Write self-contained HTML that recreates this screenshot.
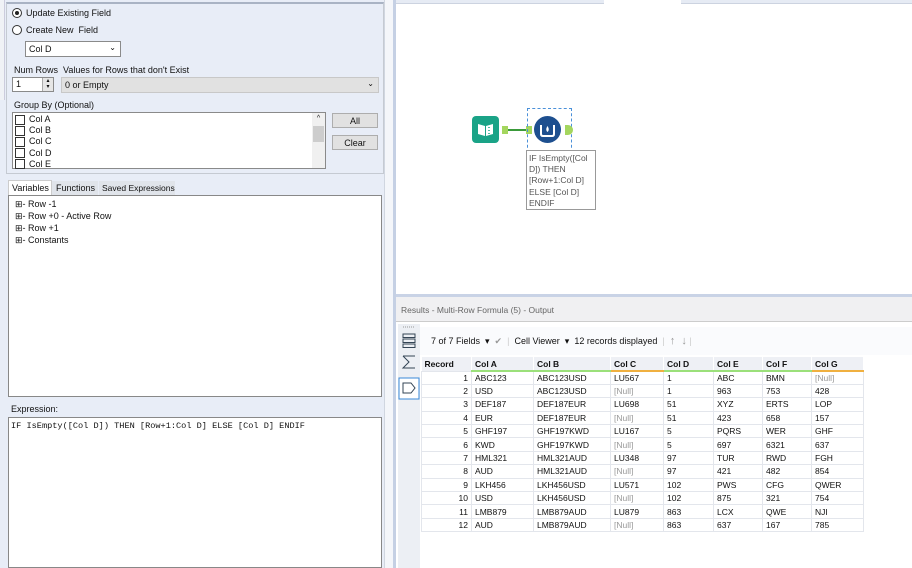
<!DOCTYPE html>
<html><head><meta charset="utf-8"><style>
*{box-sizing:border-box;margin:0;padding:0}
body{width:912px;height:568px;overflow:hidden;background:#fff;font-family:"Liberation Sans",sans-serif;font-size:9px;color:#111;position:relative}
.a{position:absolute;white-space:nowrap}
.sel{border:1px solid #8a8a8a;background:#fff}
.btn{border:1px solid #adadad;background:#e1e1e1;text-align:center;line-height:15px;font-size:9px}
.cb{width:10px;height:10px;border:1px solid #333;background:#fff;display:inline-block;vertical-align:middle;margin-right:4px}
table{border-collapse:collapse;font-size:8.5px}
td{border:1px solid #e3e6ec;height:13.4px;padding:0 3px;white-space:nowrap}
th{text-align:left;font-weight:bold;padding:0 3px;height:14px;background:#eef0f5;border-right:1px solid #fff}
.n{color:#999}
</style></head><body>
<div class="a" style="left:0;top:0;width:384px;height:568px;background:#e8edf7"></div>
<div class="a" style="left:0;top:0;width:5px;height:100px;background:#f0f2f6;border-right:1px solid #ccd"></div>
<div class="a" style="left:6px;top:2px;width:378px;height:172px;border:1px solid #c5cad2;border-top:2px solid #a9b3c4"></div>
<div class="a" style="left:12px;top:8px;width:10px;height:10px;border:1px solid #333;border-radius:50%;background:#fff"><div style="margin:2px;width:4px;height:4px;border-radius:50%;background:#222"></div></div>
<div class="a" style="left:26px;top:8px">Update Existing Field</div>
<div class="a" style="left:12px;top:25px;width:10px;height:10px;border:1px solid #333;border-radius:50%;background:#fff"></div>
<div class="a" style="left:26px;top:25px">Create New &nbsp;Field</div>
<div class="a sel" style="left:25px;top:41px;width:96px;height:16px;padding:2px 3px">Col D<span style="position:absolute;right:4px;top:1px;font-size:8px">&#8964;</span></div>
<div class="a" style="left:14px;top:65px">Num Rows</div>
<div class="a" style="left:63px;top:65px">Values for Rows that don't Exist</div>
<div class="a sel" style="left:12px;top:77px;width:42px;height:15px;padding:1px 3px">1<span style="position:absolute;right:0;top:0;width:11px;height:13px;background:#e6e6e6;border-left:1px solid #aaa;font-size:6px;line-height:6px;text-align:center">▴<br>▾</span></div>
<div class="a" style="left:61px;top:77px;width:318px;height:16px;background:#e1e1e1;border:1px solid #c8c8c8;padding:2px 3px">0 or Empty<span style="position:absolute;right:4px;top:1px;font-size:8px">&#8964;</span></div>
<div class="a" style="left:14px;top:100px">Group By (Optional)</div>
<div class="a sel" style="left:12px;top:112px;width:314px;height:57px;padding:1px 2px;line-height:11.2px">
<div><span class="cb"></span>Col A</div><div><span class="cb"></span>Col B</div><div><span class="cb"></span>Col C</div><div><span class="cb"></span>Col D</div><div><span class="cb"></span>Col E</div>
<div style="position:absolute;right:0;top:0;width:13px;height:55px;background:#f0f0f0;font-size:7px;text-align:center">^<div style="height:16px;background:#cdcdcd;margin:2px 1px"></div></div></div>
<div class="a btn" style="left:332px;top:113px;width:46px;height:15px">All</div>
<div class="a btn" style="left:332px;top:135px;width:46px;height:15px">Clear</div>
<div class="a" style="left:8px;top:180px;width:44px;height:15px;background:#fff;border:1px solid #ccc;border-bottom:none;padding:2px 3px">Variables</div>
<div class="a" style="left:52px;top:181px;width:46px;height:14px;background:#e0e4ea;padding:2px 4px">Functions</div>
<div class="a" style="left:99px;top:181px;width:76px;height:14px;background:#e0e4ea;padding:2px 3px;font-size:8.5px">Saved Expressions</div>
<div class="a" style="left:8px;top:195px;width:374px;height:202px;background:#fff;border:1px solid #888;padding:2px 6px;line-height:12px">
<div>⊞- Row -1</div><div>⊞- Row +0 - Active Row</div><div>⊞- Row +1</div><div>⊞- Constants</div></div>
<div class="a" style="left:11px;top:404px">Expression:</div>
<div class="a" style="left:8px;top:417px;width:374px;height:151px;background:#fff;border:1px solid #888;padding:3px 2px;font-family:'Liberation Mono',monospace;font-size:8.6px">IF IsEmpty([Col D]) THEN [Row+1:Col D] ELSE [Col D] ENDIF</div>
<div class="a" style="left:384px;top:0;width:12px;height:568px;background:#f4f6fa;border-left:1px solid #d0d6e0"></div>
<div class="a" style="left:393px;top:0;width:3px;height:568px;background:#c5d0e4"></div>
<div class="a" style="left:396px;top:0;width:208px;height:4px;background:#e6ebf4;border-bottom:1px solid #ccd3e0"></div>
<div class="a" style="left:681px;top:0;width:231px;height:4px;background:#e6ebf4;border-bottom:1px solid #ccd3e0"></div>
<div class="a" style="left:472px;top:116px;width:27px;height:27px;background:#1aa387;border-radius:4px"><svg width="27" height="27"><path d="M6 8 L13 10 L13 20 L6 18Z M14 10 L21 8 L21 18 L14 20Z" fill="#fff"/><path d="M17 11v1M17 14v1M17 17v1" stroke="#1aa387" stroke-width="1.5"/></svg></div>
<div class="a" style="left:502px;top:126px;width:6px;height:8px;background:#a4d65e"></div>
<div class="a" style="left:508px;top:129px;width:18px;height:1.5px;background:#3a9a3a"></div>
<div class="a" style="left:526px;top:126px;width:6px;height:8px;background:#a4d65e"></div>
<div class="a" style="left:527px;top:108px;width:45px;height:45px;border:1px dashed #4a90d9"></div>
<div class="a" style="left:534px;top:116px;width:27px;height:27px;border-radius:50%;background:#1d4f8f"><svg width="27" height="27"><path d="M7 9 L7 18 Q7 20 9 20 L18 20 Q20 20 20 18 L20 9" stroke="#fff" stroke-width="2" fill="none"/><path d="M13.5 10 Q11 14 13.5 16 Q16 14 13.5 10Z" fill="#fff"/></svg></div>
<div class="a" style="left:565px;top:125px;width:8px;height:10px;background:#a4d65e;border-radius:0 5px 5px 0"></div>
<div class="a" style="left:526px;top:150px;width:70px;height:60px;border:1px solid #999;background:#fff;padding:2px 2px;font-size:8.5px;color:#555;line-height:11.2px;white-space:normal">IF IsEmpty([Col D]) THEN [Row+1:Col D] ELSE [Col D] ENDIF</div>
<div class="a" style="left:396px;top:294px;width:516px;height:3px;background:#c9d3e6"></div>
<div class="a" style="left:396px;top:297px;width:516px;height:25px;background:#f0f0f2;border-bottom:1px solid #ccc;padding:8px 5px;color:#666;font-size:8.5px">Results - Multi-Row Formula (5) - Output</div>
<div class="a" style="left:396px;top:322px;width:516px;height:246px;background:#fff"></div>
<div class="a" style="left:398px;top:324px;width:22px;height:244px;background:#eceff4"></div>
<svg class="a" style="left:398px;top:324px" width="22" height="80"><path d="M5 3h12" stroke="#999" stroke-dasharray="1 1"/><rect x="5" y="10" width="12" height="3.5" fill="none" stroke="#345"/><rect x="5" y="15" width="12" height="3.5" fill="none" stroke="#345"/><rect x="5" y="20" width="12" height="3.5" fill="none" stroke="#345"/><path d="M5 32h12M5 32l6 6l-6 6h12" fill="none" stroke="#345"/><rect x="1" y="54" width="20" height="21" fill="#fff" stroke="#3a8ad8"/><path d="M5 59h8l4 5l-4 5h-8z" fill="none" stroke="#345"/></svg>
<div class="a" style="left:420px;top:327px;width:492px;height:28px;background:#fafbfd;font-size:9px;padding:8px 11px">7 of 7 Fields &nbsp;▾ &nbsp;<span style="color:#999">✔</span> &nbsp;<span style="color:#ccc">|</span>&nbsp; Cell Viewer &nbsp;▾ &nbsp;12 records displayed &nbsp;<span style="color:#ccc">|</span>&nbsp; <span style="color:#999;font-size:11px">↑ &nbsp;↓</span> <span style="color:#ccc">|</span></div>
<table class="a" style="left:421px;top:357px;width:443px">
<tr><th style="width:50px">Record</th><th style="width:62px;border-bottom:2px solid #9be07a">Col A</th><th style="width:77px;border-bottom:2px solid #9be07a">Col B</th><th style="width:53px;border-bottom:2px solid #f0b040">Col C</th><th style="width:50px;border-bottom:2px solid #9be07a">Col D</th><th style="width:49px;border-bottom:2px solid #9be07a">Col E</th><th style="width:49px;border-bottom:2px solid #9be07a">Col F</th><th style="border-bottom:2px solid #f0b040">Col G</th></tr>
<tr><td style="text-align:right">1</td><td>ABC123</td><td>ABC123USD</td><td>LU567</td><td>1</td><td>ABC</td><td>BMN</td><td class="n">[Null]</td></tr>
<tr><td style="text-align:right">2</td><td>USD</td><td>ABC123USD</td><td class="n">[Null]</td><td>1</td><td>963</td><td>753</td><td>428</td></tr>
<tr><td style="text-align:right">3</td><td>DEF187</td><td>DEF187EUR</td><td>LU698</td><td>51</td><td>XYZ</td><td>ERTS</td><td>LOP</td></tr>
<tr><td style="text-align:right">4</td><td>EUR</td><td>DEF187EUR</td><td class="n">[Null]</td><td>51</td><td>423</td><td>658</td><td>157</td></tr>
<tr><td style="text-align:right">5</td><td>GHF197</td><td>GHF197KWD</td><td>LU167</td><td>5</td><td>PQRS</td><td>WER</td><td>GHF</td></tr>
<tr><td style="text-align:right">6</td><td>KWD</td><td>GHF197KWD</td><td class="n">[Null]</td><td>5</td><td>697</td><td>6321</td><td>637</td></tr>
<tr><td style="text-align:right">7</td><td>HML321</td><td>HML321AUD</td><td>LU348</td><td>97</td><td>TUR</td><td>RWD</td><td>FGH</td></tr>
<tr><td style="text-align:right">8</td><td>AUD</td><td>HML321AUD</td><td class="n">[Null]</td><td>97</td><td>421</td><td>482</td><td>854</td></tr>
<tr><td style="text-align:right">9</td><td>LKH456</td><td>LKH456USD</td><td>LU571</td><td>102</td><td>PWS</td><td>CFG</td><td>QWER</td></tr>
<tr><td style="text-align:right">10</td><td>USD</td><td>LKH456USD</td><td class="n">[Null]</td><td>102</td><td>875</td><td>321</td><td>754</td></tr>
<tr><td style="text-align:right">11</td><td>LMB879</td><td>LMB879AUD</td><td>LU879</td><td>863</td><td>LCX</td><td>QWE</td><td>NJI</td></tr>
<tr><td style="text-align:right">12</td><td>AUD</td><td>LMB879AUD</td><td class="n">[Null]</td><td>863</td><td>637</td><td>167</td><td>785</td></tr>
</table>
</body></html>
